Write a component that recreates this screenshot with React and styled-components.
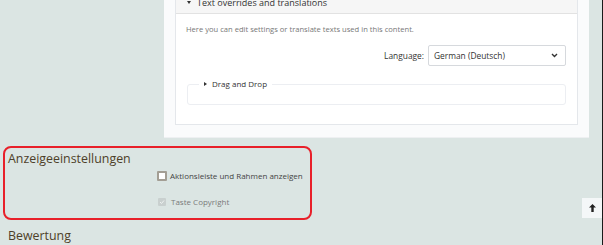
import React from "react";
import styled, { createGlobalStyle } from "styled-components";

const GlobalStyle = createGlobalStyle`
  html, body {
    margin: 0;
    padding: 0;
    background: #dbe5e3;
    font-family: "Open Sans", "Liberation Sans", sans-serif;
  }
`;

const Page = styled.div`
  width: 602px;
  height: 245px;
  overflow: hidden;
  border-right: 1px solid #1a1a1a;
  background: #dbe5e3;
`;

const TopRow = styled.div`
  display: flex;
  padding-left: 164px;
`;

const Panel = styled.div`
  width: 425px;
  background: #fafbfc;
  padding: 0 11px 12px 11px;
  box-sizing: border-box;
  margin-top: -9px;
  border-bottom: 1px solid #eef0f2;
`;

const Box = styled.div`
  background: #fff;
  border: 1px solid #e4e7eb;
  border-top: none;
`;

const BoxHeader = styled.div`
  height: 22px;
  display: flex;
  align-items: center;
  gap: 6px;
  padding-left: 11px;
  background: #f6f6f6;
  border-bottom: 1px solid #e2e2e2;
  font-size: 9px;
  color: #333;
`;

const Caret = styled.span`
  display: inline-block;
  width: 0;
  height: 0;
  border-left: ${(p) => (p.$right ? "3px solid #333" : "2.5px solid transparent")};
  border-right: ${(p) => (p.$right ? "none" : "2.5px solid transparent")};
  border-top: ${(p) => (p.$right ? "2.5px solid transparent" : "3px solid #333")};
  border-bottom: ${(p) => (p.$right ? "2.5px solid transparent" : "none")};
`;

const BoxBody = styled.div`
  padding: 10px 11px 19px 10px;
`;

const Hint = styled.div`
  font-size: 7.6px;
  color: #777;
  line-height: 11px;
`;

const LangRow = styled.div`
  display: flex;
  justify-content: flex-end;
  align-items: center;
  gap: 4px;
  margin-top: 10px;
  font-size: 8.4px;
  color: #333;
`;

const Select = styled.div`
  width: 138px;
  height: 21px;
  box-sizing: border-box;
  border: 1px solid #d6d9dd;
  border-radius: 2px;
  display: flex;
  align-items: center;
  justify-content: space-between;
  padding: 0 7px 0 5px;
  font-size: 8.4px;
  color: #333;
  background: #fff;
`;

const Fieldset = styled.fieldset`
  margin: 13px 0 0 1px;
  padding: 0;
  height: 26px;
  box-sizing: border-box;
  border: 1px solid #eceef2;
  border-radius: 3px;
  legend {
    margin-left: 11px;
    padding: 0 5px;
    display: flex;
    align-items: center;
    gap: 5px;
    font-size: 8px;
    color: #333;
    line-height: 10px;
  }
`;

const Settings = styled.section`
  margin: 8px 0 0 3px;
  width: 309px;
  height: 74px;
  box-sizing: border-box;
  border: 2px solid #e8202a;
  border-radius: 8px;
  padding: 0 0 0 3px;
`;

const SectionTitle = styled.div`
  font-size: 12.4px;
  color: #4e3f29;
  line-height: 16px;
  margin-top: ${(p) => p.$top || 0}px;
  padding-left: ${(p) => p.$indent || 0}px;
`;

const CheckRow = styled.label`
  display: flex;
  align-items: center;
  gap: 3px;
  margin-left: 149px;
  margin-top: ${(p) => p.$top}px;
  font-size: 8px;
  color: ${(p) => (p.$disabled ? "#7a7a7a" : "#444")};
  height: 11px;
`;

const Box9 = styled.span`
  width: 10px;
  height: 10px;
  box-sizing: border-box;
  border: 2px solid #a39e94;
  background: #fff;
  border-radius: 1px;
`;

const DisabledBox = styled.span`
  width: 8px;
  height: 8px;
  margin-left: 1px;
  margin-right: 2px;
  box-sizing: border-box;
  background: #c9d0cf;
  border-radius: 1px;
  display: flex;
  align-items: center;
  justify-content: center;
`;

const ToTop = styled.div`
  position: fixed;
  right: 1px;
  top: 198px;
  width: 20px;
  height: 20px;
  background: #f4f7f8;
  display: flex;
  align-items: center;
  justify-content: center;
`;

export default function App() {
  return (
    <Page>
      <GlobalStyle />
      <TopRow>
        <Panel>
          <Box>
            <BoxHeader>
              <Caret />
              <span>Text overrides and translations</span>
            </BoxHeader>
            <BoxBody>
              <Hint>Here you can edit settings or translate texts used in this content.</Hint>
              <LangRow>
                <span>Language:</span>
                <Select>
                  <span>German (Deutsch)</span>
                  <svg width="7" height="5" viewBox="0 0 7 5">
                    <path d="M1 1l2.5 2.5L6 1" fill="none" stroke="#333" strokeWidth="1.4" />
                  </svg>
                </Select>
              </LangRow>
              <Fieldset>
                <legend>
                  <Caret $right />
                  <span>Drag and Drop</span>
                </legend>
              </Fieldset>
            </BoxBody>
          </Box>
        </Panel>
      </TopRow>
      <Settings>
        <SectionTitle $top={3}>Anzeigeeinstellungen</SectionTitle>
        <CheckRow $top={3}>
          <Box9 />
          <span>Aktionsleiste und Rahmen anzeigen</span>
        </CheckRow>
        <CheckRow $top={15} $disabled>
          <DisabledBox>
            <svg width="6" height="6" viewBox="0 0 6 6">
              <path d="M1 3l1.5 1.5L5 1.5" fill="none" stroke="#eef2f1" strokeWidth="1" />
            </svg>
          </DisabledBox>
          <span>Taste Copyright</span>
        </CheckRow>
      </Settings>
      <SectionTitle $top={8} $indent={8}>Bewertung</SectionTitle>
      <ToTop>
        <svg width="9" height="10" viewBox="0 0 9 10">
          <path d="M4.5 1L1 4.6h2.3V9h2.4V4.6H8z" fill="#222" />
        </svg>
      </ToTop>
    </Page>
  );
}
